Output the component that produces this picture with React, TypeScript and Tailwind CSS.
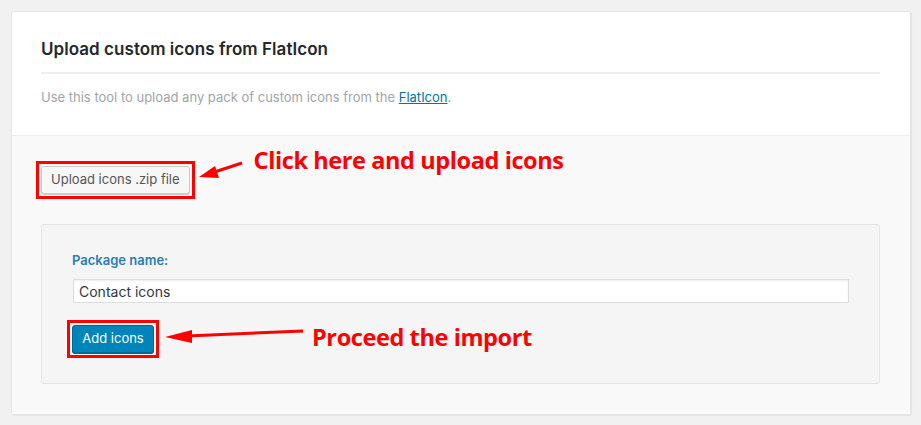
import React from "react";

const ui = "font-['Inter','Liberation_Sans',sans-serif]";
const note = "font-['Open_Sans','Noto_Sans',sans-serif] font-bold text-[#ff0000]";

function ArrowUpLeft() {
  return (
    <svg width="56" height="24" viewBox="0 0 56 24" className="shrink-0">
      <line x1="47" y1="2" x2="18" y2="11.5" stroke="#ff0000" strokeWidth="3" />
      <polygon points="4,16 20,5 24,17" fill="#ff0000" />
    </svg>
  );
}

function ArrowLeft() {
  return (
    <svg width="146" height="16" viewBox="0 0 146 16" className="shrink-0">
      <line x1="140" y1="3" x2="24" y2="8" stroke="#ff0000" strokeWidth="3" />
      <polygon points="2,9 29,2 29,15" fill="#ff0000" />
    </svg>
  );
}

export default function App() {
  return (
    <div className={`${ui} min-h-[425px] w-[921px] bg-[#f1f1f1] pt-[11px] pl-[11px]`}>
      <div className="w-[900px] rounded-[3px] border border-[#e5e5e5] bg-white shadow-[1px_1px_1px_rgba(0,0,0,0.06)]">
        {/* header */}
        <div className="px-[29px] pt-[25px] pb-[28px] border-b border-[#eeeeee]">
          <h2 className="text-[17px] leading-[24px] font-semibold text-[#23282d] pb-[11px] border-b-2 border-[#eeeeee] mr-[1px] tracking-[0.05px]">
            Upload custom icons from FlatIcon
          </h2>
          <p className="mt-[13px] text-[13px] leading-[20px] text-[#a0a5aa]">
            Use this tool to upload any pack of custom icons from the{" "}
            <a className="text-[#0073aa] underline">FlatIcon</a>.
          </p>
        </div>

        {/* body */}
        <div className="bg-[#f9f9f9] px-[24px] pt-[25px] pb-[30px]">
          <div className="flex items-center">
            <div className="border-[3px] border-[#ff0000] p-[2px]">
              <button className="h-[28px] px-[9px] rounded-[3px] border border-[#cccccc] bg-[#f7f7f7] text-[13px] text-[#555555] shadow-[0_1px_0_#cccccc]">
                Upload icons .zip file
              </button>
            </div>
            <div className="-mt-[14px] ml-0">
              <ArrowUpLeft />
            </div>
            <span className={`${note} text-[23.5px] leading-[30px] -mt-[40px] ml-[3px] tracking-[-0.4px]`}>
              Click here and upload icons
            </span>
          </div>

          <div className="mt-[25px] ml-[5px] mr-[6px] rounded-[3px] border border-[#e5e5e5] bg-[#f5f5f5] px-[30px] pt-[25px] pb-[25px]">
            <div className="text-[13px] leading-[20px] font-semibold text-[#2a7db4]">Package name:</div>
            <div className="mt-[9px] h-[24px] border border-[#dddddd] bg-white px-[5px] ml-[1px] flex items-center text-[14px] text-[#32373c] shadow-[inset_0_1px_2px_rgba(0,0,0,0.07)]">
              Contact icons
            </div>
            <div className="mt-[17px] -ml-[5px] flex items-center">
              <div className="border-[3px] border-[#ff0000] p-[2px]">
                <button className="h-[28px] w-[82px] rounded-[3px] border border-[#006799] bg-[#0085ba] text-[13px] text-white shadow-[0_1px_0_#006799]">
                  Add icons
                </button>
              </div>
              <div className="ml-[4px] mt-[-6px]">
                <ArrowLeft />
              </div>
              <span className={`${note} text-[23.5px] leading-[30px] ml-[3px] -mt-[4px] tracking-[-0.4px]`}>
                Proceed the import
              </span>
            </div>
          </div>
        </div>
      </div>
    </div>
  );
}
